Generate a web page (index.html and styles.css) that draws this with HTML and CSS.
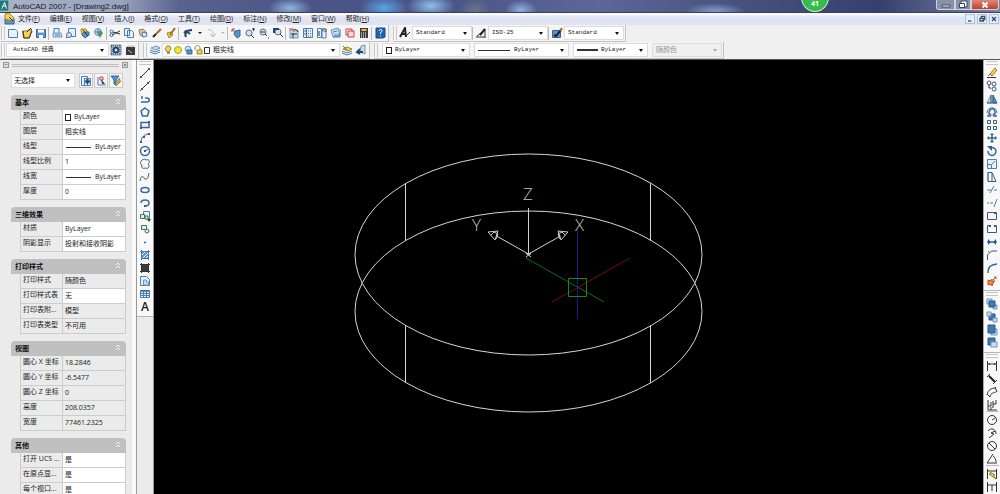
FILE: index.html
```html
<!DOCTYPE html>
<html lang="zh-CN">
<head>
<meta charset="utf-8">
<title>AutoCAD 2007 - [Drawing2.dwg]</title>
<link rel="stylesheet" href="styles.css">
</head>
<body>
<div class="app">
<header class="titlebar">
  <svg class="logo" viewBox="0 0 12 12"><path class="teal" d="M0 0h9v11H0z"/><path class="w" d="M2 9l3-7 2 7M3 6h4"/></svg>
  <h1>AutoCAD 2007 - [Drawing2.dwg]</h1>
  <span class="badge">41</span>
  <div class="winbtns">
    <button aria-label="最小化"><svg viewBox="0 0 12 10"><path class="cap" d="M2 5h8v2H2z"/></svg></button>
    <button aria-label="还原"><svg viewBox="0 0 12 10"><path class="cap" d="M4 1h6v6H4z"/><path class="cap" d="M2.500 3.500h5v4h-5z"/></svg></button>
    <button class="close" aria-label="关闭"><svg viewBox="0 0 12 10"><path class="w2" d="M3.500 2.500l5 5m0-5l-5 5"/></svg></button>
  </div>
</header>
<nav class="menubar">
  <svg class="doc" viewBox="0 0 12 12"><path class="fb" d="M1 6h9v5H1z"/><path class="fy" d="M1 1l4-1 5 5-2 3-7-2z"/><path class="k" d="M5 4l4 4"/></svg>
  <a href="#">文件(<u>F</u>)</a><a href="#">编辑(<u>E</u>)</a><a href="#">视图(<u>V</u>)</a><a href="#">插入(<u>I</u>)</a><a href="#">格式(<u>O</u>)</a><a href="#">工具(<u>T</u>)</a><a href="#">绘图(<u>D</u>)</a><a href="#">标注(<u>N</u>)</a><a href="#">修改(<u>M</u>)</a><a href="#">窗口(<u>W</u>)</a><a href="#">帮助(<u>H</u>)</a>
  <div class="docbtns">
    <button aria-label="最小化图形"><svg viewBox="0 0 12 12"><path d="M3 9h5"/></svg></button>
    <button aria-label="还原图形"><svg viewBox="0 0 12 12"><path d="M5 5V2h5v5H8M3 5h5v4H3z"/></svg></button>
    <button aria-label="关闭图形"><svg viewBox="0 0 12 12"><path d="M3 3l6 6m0-6L3 9"/></svg></button>
  </div>
</nav>

<div class="row">
  <div class="bar" role="toolbar" aria-label="标准">
    <i class="grip"></i>
    <button aria-label="新建"><svg viewBox="0 0 12 12"><path class="page" d="M1.500 2.500h7l2 2v6h-9z"/></svg></button>
    <button aria-label="打开"><svg viewBox="0 0 12 12"><path class="fy" d="M1.500 4h4l1-1h4l-2 8h-6z"/><path class="k" d="M2 4l1 7h5l3-7M6 5l3-3M9 1l2 2"/></svg></button>
    <button aria-label="保存"><svg viewBox="0 0 12 12"><path class="fb" d="M1.500 2.500h9v8h-9z"/><path class="fw" d="M3 2.500h6v3H3zM4 8h4v3H4z"/></svg></button>
    <i class="sep"></i>
    <button aria-label="打印"><svg viewBox="0 0 12 12"><path class="page" d="M3 1.500h5v5H3z"/><path class="fl" d="M2 6h8l1 4H2z"/><path class="b" d="M4 8h5"/></svg></button>
    <button aria-label="打印预览"><svg viewBox="0 0 12 12"><path class="page" d="M3.500 1.500h7v8h-7z"/><circle class="glass" cx="4" cy="8" r="2.500"/><path class="k" d="M2 10l-1 1"/></svg></button>
    <button aria-label="发布"><svg viewBox="0 0 12 12"><path class="fy" d="M2 2h5l2 4-6 2z"/><path class="fb" d="M5 5h5v3l-4 3-3-3z"/><path class="k" d="M4 3l5 6"/></svg></button>
    <button aria-label="三维 DWF"><svg viewBox="0 0 12 12"><circle class="fl" cx="5" cy="5" r="3.500"/><path class="gn" d="M7 3l3 3-3 5-2-4z"/><path class="b" d="M2 5h6M5 2v6"/></svg></button>
    <i class="sep"></i>
    <button aria-label="剪切"><svg viewBox="0 0 12 12"><path class="k" d="M11 4L3 8M11 7L4 5"/><circle cx="2.500" cy="8" r="1.500"/><circle cx="2.500" cy="4.500" r="1.500"/></svg></button>
    <button aria-label="复制"><svg viewBox="0 0 12 12"><path class="page" d="M1.500 1.500h5v7h-5zM4.500 3.500h4l2 2v5h-6z"/></svg></button>
    <button aria-label="粘贴"><svg viewBox="0 0 12 12"><path class="tan" d="M2 3l4-1 4 4-3 4-4-2z"/><path class="page" d="M5 5l4 1 1 3-4 1z"/></svg></button>
    <button aria-label="特性匹配"><svg viewBox="0 0 12 12"><path class="brown" d="M10 2L5 7"/><path class="kk" d="M5 7l-3 3"/></svg></button>
    <button aria-label="块编辑器"><svg viewBox="0 0 12 12"><path class="fy" d="M2 6l4-1 2 3-4 3z"/><path class="brown" d="M10 1L5 8"/></svg></button>
    <i class="sep wide"></i>
    <button aria-label="放弃"><svg viewBox="0 0 12 12"><path class="nv" d="M4 10c-2-4 1-7 6-7M2 6l2-2 4 3"/></svg></button>
    <button class="more" aria-label="放弃列表"></button>
    <button aria-label="重做"><svg viewBox="0 0 12 12"><path class="g" d="M3 3c4-1 6 2 5 7M5 7l3 3 3-3"/></svg></button>
    <button class="more off" aria-label="重做列表"></button>
    <i class="sep"></i>
    <button aria-label="实时平移"><svg viewBox="0 0 12 12"><path class="r" d="M2 2l4 4M2 5V2h3"/><path class="fb" d="M5 4l5-1v6l-3 2-3-4z"/></svg></button>
    <button aria-label="实时缩放"><svg viewBox="0 0 12 12"><circle class="glass" cx="5" cy="6" r="3"/><path class="k" d="M7 8l3 3M8 2h3M9.500 1v3"/></svg></button>
    <button aria-label="窗口缩放"><svg viewBox="0 0 12 12"><circle class="glass" cx="5" cy="5" r="3"/><path class="k" d="M7 7l2 2M10 11h1M3 5h4"/></svg></button>
    <button aria-label="缩放上一个"><svg viewBox="0 0 12 12"><circle class="glass" cx="6" cy="5" r="3"/><path class="k" d="M8 7l3 3"/><path class="nv" d="M2 6V2h5"/></svg></button>
    <i class="sep"></i>
    <button aria-label="特性"><svg viewBox="0 0 12 12"><path class="fl" d="M2 3h8v8H2z"/><path class="r" d="M1 2h5v3"/><path class="k" d="M7 2l3 3M3 7h6M5 6v5"/></svg></button>
    <button aria-label="设计中心"><svg viewBox="0 0 12 12"><path class="page" d="M1.500 1.500h9v9h-9z"/><path d="M4.500 2v9M6 4h1M8 4h1M6 6.500h1M8 6.500h1M6 9h1M8 9h1M2 4h2M2 7h2"/></svg></button>
    <button aria-label="工具选项板"><svg viewBox="0 0 12 12"><path class="page" d="M1.500 1.500h4v9h-4zM6 3l4 2v6H6z"/><path class="k" d="M6 2h4v3M3 4v5"/></svg></button>
    <button aria-label="图纸集"><svg viewBox="0 0 12 12"><path class="fl" d="M1 3l7-2 2 8-7 1z"/><path class="b" d="M3 5l4-1M4 8h6M10 2v8H3"/></svg></button>
    <button aria-label="标记集"><svg viewBox="0 0 12 12"><path class="r" d="M2 2h6v6H2z"/><path class="pink" d="M4 4h6v6H4z"/></svg></button>
    <button aria-label="计算器"><svg viewBox="0 0 12 12"><path class="fk" d="M2 1h8v10H2z"/><path class="y" d="M3.500 3h5"/><path class="w dash" d="M3 6h6M3 8h6M3 10h6"/></svg></button>
    <i class="sep"></i>
    <button aria-label="帮助"><svg viewBox="0 0 12 12"><path class="help" d="M2 1h9v9l-2 1H2z"/><path class="w" d="M5 4c0-2 4-2 3 0L6.500 6v1M6.500 8.500v1"/></svg></button>
  </div>
  <div class="bar" role="toolbar" aria-label="样式">
    <i class="grip"></i>
    <button aria-label="文字样式"><svg viewBox="0 0 12 12"><path class="kk" d="M1 10l5-9 1 9M3 7h4"/><path class="k" d="M6 10l5-5"/></svg></button>
    <label class="combo w60"><select aria-label="文字样式控制"><option>Standard</option></select></label>
    <i class="sep"></i>
    <button aria-label="标注样式"><svg viewBox="0 0 12 12"><path class="k" d="M1 10h9M10 2v9M2 9l4-3"/><path class="kk" d="M10 2L5 8"/></svg></button>
    <label class="combo w60"><select aria-label="标注样式控制"><option>ISO-25</option></select></label>
    <i class="sep"></i>
    <button aria-label="表格样式"><svg viewBox="0 0 12 12"><path class="fb" d="M1.500 3.500h8v7h-8z"/><path class="kk" d="M3 8l2 1 5-6"/><path class="brown" d="M9 4l2-3"/></svg></button>
    <label class="combo w60"><select aria-label="表格样式控制"><option>Standard</option></select></label>
  </div>
</div>

<div class="row">
  <div class="bar" role="toolbar" aria-label="工作空间">
    <i class="grip"></i>
    <label class="combo w100"><select aria-label="工作空间"><option>AutoCAD 经典</option></select></label>
    <button aria-label="工作空间设置"><svg viewBox="0 0 12 12"><path class="fl" d="M1 1h10v10H1z"/><circle class="nv" cx="6" cy="6" r="2.500"/><path class="k dash" d="M1 2h10M1 10h10M2 1v10M10 1v10"/></svg></button>
    <button aria-label="我的工作空间"><svg viewBox="0 0 12 12"><path class="fk" d="M2 3h9v8H2z"/><path class="g" d="M2 3l3-1h5M4 6l4 3"/></svg></button>
  </div>
  <div class="bar" role="toolbar" aria-label="图层">
    <i class="grip"></i>
    <button aria-label="图层特性管理器"><svg viewBox="0 0 12 12"><path class="fl" d="M2 4l5-2 4 2-5 2z"/><path class="b" d="M1 6l5 2 5-2M1 8l5 2 5-2"/></svg></button>
    <label class="combo w178"><svg class="layers" viewBox="0 0 48 12"><path class="fy" d="M4 2h3l1 3-2 3H4L2 5z"/><path class="k" d="M4 9h3"/><circle class="sun" cx="15" cy="6" r="3.500"/><circle class="fl" cx="25" cy="5" r="3"/><path class="fb" d="M24 6h5v4h-5z"/><path class="olive" d="M32 6V3c2-3 5-1 5 1v3"/><path class="fy" d="M34 6h5v4h-5z"/><path class="k" d="M41.500 3.500h5v6h-5z"/></svg><select aria-label="图层控制"><option>粗实线</option></select></label>
    <button aria-label="置为当前图层"><svg viewBox="0 0 12 12"><path class="b" d="M1 7l5 2 5-2M1 9l5 2 5-2"/><path class="fy" d="M2 5l4-2 5 2-4 2z"/><path class="gnl" d="M2 2l4 4"/></svg></button>
    <button aria-label="上一个图层"><svg viewBox="0 0 12 12"><path class="fl" d="M6 2l4-1v9l-5-2z"/><path class="nv" d="M8 8H3M5 5L2 8l3 2"/></svg></button>
  </div>
  <div class="bar props" role="toolbar" aria-label="特性">
    <i class="grip"></i>
    <label class="combo w88"><i class="square"></i><select aria-label="颜色控制"><option>ByLayer</option></select></label>
    <label class="combo w95"><i class="line"></i><select aria-label="线型控制"><option>ByLayer</option></select></label>
    <label class="combo w75"><i class="line thick"></i><select aria-label="线宽控制"><option>ByLayer</option></select></label>
    <label class="combo w69 disabled"><select aria-label="打印样式控制" disabled><option>随颜色</option></select></label>
  </div>
</div>

<div class="work">
  <aside class="palette">
    <div class="palhead"><button aria-label="折叠">−</button><i></i><button aria-label="关闭">×</button></div>
    <div class="pick">
      <label class="combo"><select aria-label="选择对象"><option>无选择</option></select></label>
      <button aria-label="切换 PICKADD"><svg viewBox="0 0 12 12"><path class="page" d="M1.500 1.500h6v9h-6zM4.500 3.500h6v7h-6z"/><path class="nv" d="M7.500 4v5M5 6.500h5"/></svg></button>
      <button aria-label="选择对象"><svg viewBox="0 0 12 12"><path class="b" d="M3 2v8h8"/><path class="r" d="M5 2h3v3H5z"/><path class="fk" d="M6 4l4 5H7z"/></svg></button>
      <button aria-label="快速选择"><svg viewBox="0 0 12 12"><path class="fb" d="M1 1h8L6 5v5L4 9V5z"/><path class="fy" d="M10 3L6 7h3l-3 4 5-5H9z"/></svg></button>
    </div>
    <section>
      <h2>基本<button aria-label="折叠基本"><svg viewBox="0 0 8 8"><path d="M2 4l2-2 2 2M2 7l2-2 2 2"/></svg></button></h2>
      <table>
        <tr><th>颜色</th><td><span><i class="square"></i>ByLayer</span></td></tr>
        <tr><th>图层</th><td>粗实线</td></tr>
        <tr><th>线型</th><td><span><i class="line"></i>ByLayer</span></td></tr>
        <tr><th>线型比例</th><td>1</td></tr>
        <tr><th>线宽</th><td><span><i class="line"></i>ByLayer</span></td></tr>
        <tr><th>厚度</th><td>0</td></tr>
      </table>
    </section>
    <section>
      <h2>三维效果<button aria-label="折叠三维效果"><svg viewBox="0 0 8 8"><path d="M2 4l2-2 2 2M2 7l2-2 2 2"/></svg></button></h2>
      <table>
        <tr><th>材质</th><td>ByLayer</td></tr>
        <tr><th>阴影显示</th><td>投射和接收阴影</td></tr>
      </table>
    </section>
    <section>
      <h2>打印样式<button aria-label="折叠打印样式"><svg viewBox="0 0 8 8"><path d="M2 4l2-2 2 2M2 7l2-2 2 2"/></svg></button></h2>
      <table>
        <tr class="ro"><th>打印样式</th><td>随颜色</td></tr>
        <tr><th>打印样式表</th><td>无</td></tr>
        <tr class="ro"><th>打印表附...</th><td>模型</td></tr>
        <tr class="ro"><th>打印表类型</th><td>不可用</td></tr>
      </table>
    </section>
    <section>
      <h2>视图<button aria-label="折叠视图"><svg viewBox="0 0 8 8"><path d="M2 4l2-2 2 2M2 7l2-2 2 2"/></svg></button></h2>
      <table>
        <tr class="ro"><th>圆心 X 坐标</th><td>18.2846</td></tr>
        <tr class="ro"><th>圆心 Y 坐标</th><td>-6.5477</td></tr>
        <tr class="ro"><th>圆心 Z 坐标</th><td>0</td></tr>
        <tr class="ro"><th>高度</th><td>208.0357</td></tr>
        <tr class="ro"><th>宽度</th><td>77461.2325</td></tr>
      </table>
    </section>
    <section>
      <h2>其他<button aria-label="折叠其他"><svg viewBox="0 0 8 8"><path d="M2 4l2-2 2 2M2 7l2-2 2 2"/></svg></button></h2>
      <table>
        <tr><th>打开 UCS ...</th><td>是</td></tr>
        <tr><th>在原点显...</th><td>是</td></tr>
        <tr><th>每个视口...</th><td>是</td></tr>
      </table>
    </section>
  </aside>

  <div class="dock draw">
    <div class="vbar" role="toolbar" aria-label="绘图">
      <i class="vgrip"></i>
      <button aria-label="直线"><svg viewBox="0 0 12 12"><path class="k" d="M2 10l8-8"/><path class="dot" d="M1 9h2v2H1zM9 1h2v2H9z"/></svg></button>
      <button aria-label="构造线"><svg viewBox="0 0 12 12"><path class="k" d="M1 11l10-10"/><path class="dot" d="M2 8h2v2H2zM8 2h2v2H8z"/></svg></button>
      <button aria-label="多段线"><svg viewBox="0 0 12 12"><path class="b2" d="M2 9h6c3 0 3-4 0-4H6M3 6V3"/></svg></button>
      <button aria-label="正多边形"><svg viewBox="0 0 12 12"><path class="b2" d="M6 2l4 3-1.500 5h-5L2 5z"/></svg></button>
      <button aria-label="矩形"><svg viewBox="0 0 12 12"><path class="b2" d="M2 3.500h8v5H2z"/><path class="dot" d="M1 8h2v2H1zM9 2h2v2H9z"/></svg></button>
      <button aria-label="圆弧"><svg viewBox="0 0 12 12"><path class="nv1" d="M2 10c0-4 3-8 8-8"/><path class="dot" d="M1 9h2v2H1zM4 4h2v2H4zM9 1h2v2H9z"/></svg></button>
      <button aria-label="圆"><svg viewBox="0 0 12 12"><circle class="b2" cx="6" cy="6" r="4.500"/><path class="nv1" d="M6 6l3-2"/><path class="dot" d="M5 5h2v2H5z"/></svg></button>
      <button aria-label="修订云线"><svg viewBox="0 0 12 12"><path class="nv1" d="M3 2c2-1 3-1 4 0 3-1 4 1 3 3-1 1-1 1 0 2 0 3-1 4-4 3-2 1-4 0-3-3-2-1-2-3 0-5z"/></svg></button>
      <button aria-label="样条曲线"><svg viewBox="0 0 12 12"><path class="nv1" d="M1 10c1-6 3-5 4-3 3 3 4 0 5-5"/></svg></button>
      <button aria-label="椭圆"><svg viewBox="0 0 12 12"><ellipse class="b2" cx="6" cy="6" rx="4" ry="2.500"/></svg></button>
      <button aria-label="椭圆弧"><svg viewBox="0 0 12 12"><path class="b2" d="M2 6c0-4 8-4 8 0 0 2-2 3-4 3"/><path class="dot" d="M5 8h2v2H5z"/></svg></button>
      <button aria-label="插入块"><svg viewBox="0 0 12 12"><path class="page" d="M4.500 1.500h6v7h-6z"/><path class="green" d="M1.500 4.500h4v4h-4zM6 6h3v3H6z"/><path class="fk" d="M8 9h4l-2 3z"/></svg></button>
      <button aria-label="创建块"><svg viewBox="0 0 12 12"><path class="green" d="M2.500 2.500h5v4h-5z"/><circle class="green" cx="8" cy="8" r="2"/></svg></button>
      <button aria-label="点"><svg viewBox="0 0 12 12"><path class="fb" d="M5.500 6h1v1h-1z"/></svg></button>
      <button aria-label="图案填充"><svg viewBox="0 0 12 12"><path class="fb" d="M2.500 2.500h7v7h-7z"/><path class="w" d="M3 6l3-3M4 9l5-5M7 9l2-2"/><path class="b" d="M1 2.500h10M2.500 1v10M9.500 1v10"/></svg></button>
      <button aria-label="渐变色"><svg viewBox="0 0 12 12"><path class="fk" d="M2.500 2.500h7v7h-7z"/><path class="k" d="M1 2.500h10M2.500 1v10M9.500 1v10M1 9.500h10"/></svg></button>
      <button aria-label="面域"><svg viewBox="0 0 12 12"><path class="page" d="M1.500 1.500h6l3 3v6h-9z"/><path class="fl" d="M4.500 5h3v2h2v3h-5z"/></svg></button>
      <button aria-label="表格"><svg viewBox="0 0 12 12"><path class="page" d="M1.500 2.500h9v7h-9z"/><path class="b2" d="M2 3h8"/><path class="b" d="M2 5.500h8M2 7.500h8M4.500 3v6M7.500 3v6"/></svg></button>
      <button class="mtext" aria-label="多行文字">A</button>
    </div>
  </div>

  <main class="canvas">
    <svg viewBox="154 60 829 434" preserveAspectRatio="xMidYMid slice">
      <g class="model">
        <ellipse cx="528.500" cy="254.500" rx="173.500" ry="100.500"/>
        <ellipse cx="528.500" cy="311.500" rx="173.500" ry="100.500"/>
        <path d="M405.500 183v58M405.500 325v58M650.500 183v58M650.500 325v58"/>
      </g>
      <path class="ax-x" d="M552 302l78-44"/>
      <path class="ax-y" d="M526 258l78 44"/>
      <path class="ax-z" d="M577.500 230v89"/>
      <path class="pickbox" d="M568.500 278.500h18v18h-18z"/>
      <g class="ucs">
        <path d="M528.500 208v46l-32-18M528.500 254l32-18M526 254h5M526 257l5-4M526 253l5 4"/>
        <path d="M488 232l10-1-3 9zM491 235l3-3 4 2-2 5M568 232l-10-1 3 9zM565 235l-3-3-4 2 2 5"/>
      </g>
      <g class="axis"><text x="523" y="200">Z</text><text x="472" y="231">Y</text><text x="575" y="231">X</text></g>
    </svg>
  </main>

  <div class="dock modify">
    <div class="vbar" role="toolbar" aria-label="修改">
      <i class="vgrip"></i>
      <button aria-label="删除"><svg viewBox="0 0 12 12"><path class="fy" d="M4 7l5-6 2 2-5 6z"/><path class="r" d="M2 9l2-2 2 2"/><path class="k" d="M1 10.500h9"/></svg></button>
      <button aria-label="复制对象"><svg viewBox="0 0 12 12"><circle class="nv1" cx="3" cy="3" r="2"/><circle class="nv1" cx="8" cy="4" r="2"/><circle class="nv1" cx="8" cy="9" r="2"/><path class="k" d="M3 5v3h2"/></svg></button>
      <button aria-label="镜像"><svg viewBox="0 0 12 12"><path class="fl" d="M5 2v8H1z"/><path class="fb" d="M7 2v8h4z"/><path class="nv1" d="M1 10h10M5 2v8M7 2v8"/></svg></button>
      <button aria-label="偏移"><svg viewBox="0 0 12 12"><path class="b2" d="M1 10h3V8H3c0-7 7-7 6 0H8v2h3"/><path class="b" d="M1 7c0-7 10-7 10 0M5 9h2"/></svg></button>
      <button aria-label="阵列"><svg viewBox="0 0 12 12"><path class="nv1" d="M1.500 1.500h3v3h-3zM7.500 1.500h3v3h-3zM1.500 7.500h3v3h-3zM7.500 7.500h3v3h-3z"/></svg></button>
      <button aria-label="移动"><svg viewBox="0 0 12 12"><path class="b2" d="M6 2v8M2 6h8"/><path class="solid" d="M4 3l2-2 2 2zM4 9l2 2 2-2zM3 4L1 6l2 2zM9 4l2 2-2 2z"/></svg></button>
      <button aria-label="旋转"><svg viewBox="0 0 12 12"><path class="b2" d="M4 3a4 4 0 1 1-2 3"/><path class="solid" d="M1 1h5v5z"/></svg></button>
      <button aria-label="缩放"><svg viewBox="0 0 12 12"><path class="page" d="M1.500 1.500h9v9h-9z"/><path class="b" d="M1.500 6.500h4v4M6 6l3-3"/></svg></button>
      <button aria-label="拉伸"><svg viewBox="0 0 12 12"><path class="nv1" d="M2 1.500h4l4 9H2zM6 2v8"/><path class="b" d="M2 1v9"/></svg></button>
      <button aria-label="修剪"><svg viewBox="0 0 12 12"><path class="b" d="M1 6h4M8 6h3M4 9l4-7"/></svg></button>
      <button aria-label="延伸"><svg viewBox="0 0 12 12"><path class="b" d="M1 6h2M4 6h3M8 10l3-8"/></svg></button>
      <button aria-label="打断于点"><svg viewBox="0 0 12 12"><path class="nv1" d="M1.500 2.500h9v7h-9z"/><path class="dot" d="M8 2h2v2H8z"/></svg></button>
      <button aria-label="打断"><svg viewBox="0 0 12 12"><path class="nv1" d="M4 2.500H1.500v7h9v-7H8"/><path class="dot" d="M3 2h2v2H3zM8 2h2v2H8z"/></svg></button>
      <button aria-label="合并"><svg viewBox="0 0 12 12"><path class="b2" d="M1 6h10"/><path class="solid" d="M2 3l3 3-3 3zM10 3L7 6l3 3z"/></svg></button>
      <button aria-label="倒角"><svg viewBox="0 0 12 12"><path class="nv1" d="M1.500 11V6l4-4H11"/><path class="b" d="M2 2l2 2"/></svg></button>
      <button aria-label="圆角"><svg viewBox="0 0 12 12"><path class="b2" d="M2 11c0-6 2-8 9-9"/></svg></button>
      <button aria-label="分解"><svg viewBox="0 0 12 12"><path class="orange" d="M2 5l3 1 1-2v2l3 0-2 2-1 3-1-2-3 1z"/><path class="r" d="M7 5l3-3M8 2h2v2"/></svg></button>
    </div>
    <div class="vbar" role="toolbar" aria-label="绘图次序">
      <i class="vgrip"></i>
      <button aria-label="前置"><svg viewBox="0 0 12 12"><path class="fl" d="M1 1h5v5H1zM7 7h4v4H7z"/><path class="order" d="M3 3h6v6H3z"/></svg></button>
      <button aria-label="后置"><svg viewBox="0 0 12 12"><path class="order" d="M3 3h6v6H3z"/><path class="fl" d="M1 1h4v4H1zM7 7h4v4H7z"/></svg></button>
      <button aria-label="置于对象之上"><svg viewBox="0 0 12 12"><path class="fl" d="M5 5h6v6H5z"/><path class="order" d="M2 1h7v8H2z"/></svg></button>
      <button aria-label="置于对象之下"><svg viewBox="0 0 12 12"><path class="order" d="M2 1h7v7H2z"/><path class="fl" d="M5 5h6v5H5z"/></svg></button>
    </div>
    <div class="vbar" role="toolbar" aria-label="标注">
      <i class="vgrip"></i>
      <button aria-label="线性"><svg viewBox="0 0 12 12"><path class="k" d="M1.500 1v10M10.500 1v10M2 4h8"/><path class="fk" d="M2 4l2-1v2zM10 4L8 3v2z"/></svg></button>
      <button aria-label="对齐"><svg viewBox="0 0 12 12"><path class="kk" d="M3 3l6 6"/><path class="k" d="M1 4l3-3M7 11l4-4"/></svg></button>
      <button aria-label="弧长"><svg viewBox="0 0 12 12"><path class="k" d="M1 9c1-5 4-7 9-7M4 11c0-3 2-4 6-5M1 8l3 3M9 1l2 5"/></svg></button>
      <button aria-label="坐标"><svg viewBox="0 0 12 12"><path class="k" d="M2 1v10h9M2 7h3V3M7 2v7M7 5h3V1M5 11V8"/></svg></button>
      <i class="vsep"></i>
      <button aria-label="半径"><svg viewBox="0 0 12 12"><circle class="k" cx="6" cy="6" r="4.500"/><path class="k" d="M6 6l3-2"/></svg></button>
      <button aria-label="折弯"><svg viewBox="0 0 12 12"><path class="k" d="M2 4c3-4 8-2 8 3M9 4L5 6l3 1-5 4"/></svg></button>
      <button aria-label="直径"><svg viewBox="0 0 12 12"><circle class="k" cx="6" cy="6" r="4.500"/><path class="k" d="M3 3l6 6"/></svg></button>
      <button aria-label="角度"><svg viewBox="0 0 12 12"><path class="k" d="M7 1L1 10h10M7 3c2 1 3 4 3 6"/></svg></button>
      <i class="vsep"></i>
      <button aria-label="快速标注"><svg viewBox="0 0 12 12"><path class="k" d="M1.500 1v10M10.500 1v10M2 3h8"/><path class="fy" d="M4 4l5 3H7l3 4-7-5h2z"/></svg></button>
      <button aria-label="基线"><svg viewBox="0 0 12 12"><path class="k" d="M1.500 1v10M10.500 1v10M2 4h8M6 4v6"/></svg></button>
    </div>
  </div>
</div>
</div>
</body>
</html>
```
FILE: styles.css
```css
* { box-sizing: border-box; }
body { margin: 0; font: 7px/10px "Open Sans", "Noto Sans CJK SC", sans-serif; color: #222; background: #f0f0f0; }
button { display: flex; align-items: center; justify-content: center; padding: 0; border: 0; background: none; color: inherit; font: inherit; flex: none; }
svg { display: block; fill: none; stroke: #3a6a9c; }
i { flex: none; }
a { color: inherit; text-decoration: none; }

.app { display: flex; flex-direction: column; height: 100vh; overflow: hidden; }

/* icon paints */
.k { stroke: #333; }
.kk { stroke: #222; stroke-width: 2; }
.b { stroke: #4a7fb5; }
.b2 { stroke: #35699f; stroke-width: 1.5; }
.nv { stroke: #24476f; stroke-width: 2; }
.nv1 { stroke: #3d5a7c; }
.g { stroke: #b4b8bd; }
.r { stroke: #c8403c; }
.y { stroke: #ffb62e; stroke-width: 2; }
.w { stroke: #fff; }
.w2 { stroke: #fff; stroke-width: 2; }
.green { stroke: #3f7850; fill: #e1efe2; }
.gnl { stroke: #3c8a3c; }
.brown { stroke: #a06b32; stroke-width: 2; }
.olive { stroke: #8e8a1c; }
.dash { stroke-dasharray: 1 1; }
.teal { fill: #1d7878; stroke: none; }
.page { fill: #e6f1fb; stroke: #4b80b4; }
.glass { fill: #cfe4f6; stroke: #55718e; }
.fb { fill: #5b93cb; stroke: #34679c; }
.fl { fill: #c9dcee; stroke: #6f97bd; }
.fy { fill: #f4d351; stroke: #9c862c; }
.fw { fill: #fff; stroke: none; }
.fk { fill: #3b3b3b; stroke: none; }
.gn { fill: #4f9a5d; stroke: none; }
.sun { fill: #f2e432; stroke: #aaa014; }
.tan { fill: #d9cba8; stroke: #857a5c; }
.pink { fill: #f9dcdc; stroke: #c8403c; }
.help { fill: #1f63ae; stroke: #174a85; }
.dot, .solid { fill: #2f5c8c; stroke: none; }
.orange { fill: #ee8d3c; stroke: #b4502a; }
.order { fill: #3f78b2; stroke: #2b5a8c; }
.cap { fill: #fff; stroke: #3e465c; }

.titlebar { position: relative; display: flex; flex: none; height: 13px; overflow: hidden; border-bottom: 1px solid #3a3f5c;
  background:
    radial-gradient(ellipse 22px 10px at 290px 8px, #8fb4dc, transparent),
    radial-gradient(ellipse 24px 12px at 384px 8px, #5aa4e6, transparent),
    radial-gradient(ellipse 24px 12px at 431px 6px, #8fc0ea, transparent),
    radial-gradient(ellipse 16px 12px at 475px 10px, #6a7486, transparent),
    radial-gradient(ellipse 16px 10px at 521px 10px, #8eb0e0, transparent),
    radial-gradient(ellipse 30px 8px at 715px 11px, #7d9cc8, transparent),
    linear-gradient(90deg, #a9b1c6, #9aa3bf 12%, #58628f 18%, #4b5687 30%, #4a5488 45%, #5d6797 60%, #46507f 75%, #35406f 88%, #7b84a2); }
.titlebar h1 { margin: 0; padding-left: 2px; font: 400 8px/13px "Liberation Sans", sans-serif; color: #16181f; }
.logo { width: 11px; height: 12px; }
.badge { position: absolute; left: 80.1%; top: -17px; width: 28px; height: 29px; border: 1px solid #d5eed8; border-radius: 50%; background: #34bd4c; color: #fff; font-size: 7px; font-weight: 700; line-height: 40px; text-align: center; }
.winbtns { display: flex; margin-left: auto; height: 10px; }
.winbtns button { width: 16px; border: 1px solid #cdd2df; border-top: 0; background: #8991aa; }
.winbtns button:first-child { width: 19px; border-radius: 0 0 0 3px; }
.winbtns .close { width: 28px; margin-right: 1px; border-radius: 0 0 3px 0; background: linear-gradient(#d98a80, #c23b27); }
.winbtns svg { width: 12px; height: 10px; }

.menubar { display: flex; align-items: center; gap: 10px; flex: none; height: 12px; padding-right: 1px; background: linear-gradient(#fff, #dfe3f2 40%, #dfe3f2); }
.doc { width: 12px; height: 12px; margin: 0 -8px 0 4px; }
.docbtns { display: flex; gap: 2px; margin-left: auto; }
.docbtns button { width: 10px; height: 10px; border: 1px solid #a9c3df; background: #e3effa; }
.docbtns svg { width: 8px; height: 8px; stroke: #3b4a60; stroke-width: 2; }

.row { display: flex; flex: none; gap: 4px; height: 17px; padding-left: 1px; }
.bar { display: flex; align-items: center; padding-right: 1px; border: solid #c2c2c2; border-width: 0 1px 1px 0; background: #f5f5f5; }
.bar button { width: 14px; height: 14px; }
.bar button svg, .vbar svg { width: 12px; height: 12px; }
.grip { width: 4px; height: 14px; margin-right: 1px; border: solid #c9c9c9; border-width: 0 1px; }
.sep { width: 2px; height: 13px; border-left: 1px solid #b8b8b8; }
.sep.wide { width: 3px; }
.bar .more { width: 9px; }
.more::after { content: ""; border: 2px solid transparent; border-top-color: #222; border-bottom: 0; }
.more.off::after { border-top-color: #bbb; }

.combo { display: flex; align-items: center; height: 14px; padding: 0 4px 0 3px; border: 1px solid #dcdcdc; background: #fff; font: 6px/12px "Liberation Mono", "Noto Sans CJK SC", monospace; color: #222; }
.combo::after { content: ""; flex: none; border: 2px solid transparent; border-top: 3px solid #111; border-bottom: 0; pointer-events: none; }
.combo select { flex: 1; min-width: 0; width: 0; height: 12px; padding: 0; border: 0; appearance: none; background: none; color: inherit; font: inherit; }
.w60 { width: 60px; }
.w69 { width: 70px; }
.w75 { width: 75px; }
.w88 { width: 88px; }
.w95 { width: 95px; }
.w100 { width: 103px; padding-left: 6px; }
.w178 { width: 178px; padding-left: 0; font-size: 7px; }
.props { gap: 4px; }
.props .grip { margin-right: 0; }
.disabled { background: #f0f0f0; color: #999; font-size: 7px; }
.disabled select { opacity: 1; }
.disabled::after { border-top-color: #aaa; }
.layers { width: 48px; height: 12px; margin-right: 2px; }
.square { width: 6px; height: 7px; margin-right: 3px; border: 1px solid #222; }
.line { width: 32px; border-top: 1px solid #333; margin-right: 4px; }
.line.thick { width: 21px; border-top-width: 2px; margin-right: 3px; }

.work { display: flex; flex: 1; min-height: 0; border-top: 1px solid #555; }
.palette { display: flex; flex-direction: column; gap: 7px; flex: none; width: 136px; padding: 1px 10px 0 11px; border-right: 4px solid #fafafa; background: #ebebeb; overflow: hidden; }
.palette > * { flex: none; }
.palhead { display: flex; align-items: center; gap: 3px; height: 8px; margin: 0 -6px -3px -8px; }
.palhead button { width: 6px; height: 6px; border: 1px solid #999; background: #ddd; font-size: 6px; line-height: 4px; }
.palhead i { flex: 1; height: 3px; border: solid #bdbdbd; border-width: 1px 0; }
.pick { display: flex; gap: 1px; margin-right: -1px; }
.pick .combo { width: 70px; height: 15px; margin-right: 3px; padding-left: 2px; font: 7px/12px "Open Sans", "Noto Sans CJK SC", sans-serif; }
.pick button { width: 14px; height: 15px; border: 1px solid #ccc; background: #f4f4f4; }
.pick svg { width: 12px; height: 12px; }
.palette section { width: 115px; }
.palette h2 { display: flex; align-items: center; justify-content: space-between; height: 15px; margin: 0; padding: 0 4px; border-radius: 4px 4px 0 0; background: #c0c0c0; font-size: 7px; font-weight: 700; color: #111; }
.palette h2 svg { width: 8px; height: 8px; stroke: #f4f4f4; }
.palette h2 button { margin-top: -3px; }
table { width: 106px; margin-left: 9px; border-collapse: separate; border-spacing: 0; table-layout: fixed; }
th, td { height: 15px; padding: 0 0 0 2px; border: solid #ccc; border-width: 0 1px 1px 0; text-align: left; font-weight: 400; white-space: nowrap; overflow: hidden; }
th { width: 43px; padding-bottom: 2px; border-left-width: 1px; background: #ebebeb; }
td { background: #fff; }
.ro td { background: #ebebeb; }
td span { display: flex; align-items: center; }
td .line { width: 25px; margin-left: 1px; }

.dock { display: flex; flex-direction: column; flex: none; }
.draw { width: 18px; border: solid #999; border-width: 0 1px; background: #ebebeb; }
.modify { width: 17px; border-left: 1px solid #aaa; overflow: hidden; background: #f0f0f0; }
.vbar { display: flex; flex-direction: column; align-items: center; flex: none; padding: 1px 0 3px; border-bottom: 1px solid #b5b5b5; background: #f8f8f8; }
.vgrip { width: 12px; height: 4px; margin-bottom: 1px; border: solid #c5c5c5; border-width: 1px 0; }
.vsep { width: 13px; height: 2px; border-top: 1px solid #bbb; }
.vbar button { width: 15px; height: 13px; }
.vbar .mtext { font: 600 12px/13px "Open Sans", sans-serif; }

.canvas { flex: 1; min-width: 0; background: #000; }
.canvas > svg { width: 100%; height: 100%; }
.model { stroke: #d6d6d6; }
.ucs { stroke: #d0d0d0; }
.ax-x { stroke: #6e1018; }
.ax-y { stroke: #0f6b18; }
.ax-z { stroke: #1c1c90; }
.pickbox { stroke: #128a20; }
.axis { fill: #c4c4c4; stroke: none; font: 300 17px "Open Sans", sans-serif; }
```
